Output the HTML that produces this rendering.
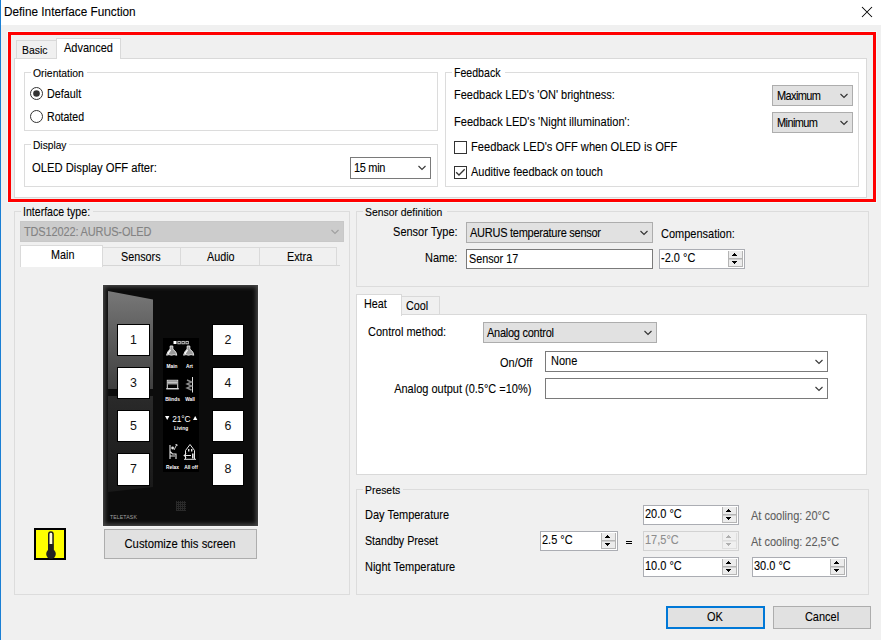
<!DOCTYPE html><html><head><meta charset="utf-8"><style>
html,body{margin:0;padding:0;}
body{width:881px;height:640px;overflow:hidden;position:relative;background:#f0f0f0;font-family:"Liberation Sans",sans-serif;}
.t{position:absolute;white-space:nowrap;font-family:"Liberation Sans",sans-serif;-webkit-text-stroke:0.1px currentColor;}
.r{position:absolute;box-sizing:border-box;}
svg.r{overflow:visible;}
</style></head><body>
<div class="r" style="left:0px;top:0px;width:881px;height:25px;background:#fff;"></div>
<div class="r" style="left:0px;top:0px;width:1px;height:640px;background:#1a7fd4;"></div>
<div class="t" style="left:4.3px;top:5px;font-size:12.626px;line-height:15px;color:#000;transform:scaleX(0.9346);transform-origin:0 0;">Define Interface Function</div>
<svg class="r" style="left:861px;top:6px" width="12" height="12" viewBox="0 0 12 12"><path d="M1 1 L11 11 M11 1 L1 11" stroke="#000" stroke-width="1.05" fill="none"/></svg>
<div class="r" style="left:7px;top:31px;width:870px;height:172px;border:1px solid #f2fcfc;"></div>
<div class="r" style="left:8px;top:32px;width:868px;height:170px;border:3px solid #ff0000;"></div>
<div class="r" style="left:14px;top:58px;width:853px;height:140px;background:#fff;border:1px solid #d9d9d9;"></div>
<div class="r" style="left:16px;top:40px;width:41px;height:18px;background:#f0f0f0;border:1px solid #d9d9d9;border-bottom:none;"></div>
<div class="r" style="left:56px;top:38px;width:65px;height:21px;background:#fff;border:1px solid #d9d9d9;border-bottom:none;"></div>
<div class="r" style="left:57px;top:58px;width:63px;height:1px;background:#fff;"></div>
<div class="t" style="left:22.1px;top:43px;font-size:11.7px;line-height:14px;color:#000;transform:scaleX(0.8889);transform-origin:0 0;">Basic</div>
<div class="t" style="left:63.7px;top:41px;font-size:12.375px;line-height:15px;color:#000;transform:scaleX(0.8889);transform-origin:0 0;">Advanced</div>
<div class="r" style="left:24px;top:72px;width:414px;height:59px;border:1px solid #dcdcdc;"></div>
<div class="r" style="left:30.5px;top:72px;width:56.0px;height:1px;background:#fff;"></div>
<div class="t" style="left:32.5px;top:66px;font-size:11.7px;line-height:14px;color:#000;transform:scaleX(0.8889);transform-origin:0 0;">Orientation</div>
<svg class="r" style="left:30px;top:87px" width="13" height="13" viewBox="0 0 13 13"><circle cx="6.5" cy="6.5" r="6" fill="#fff" stroke="#333" stroke-width="1"/><circle cx="6.5" cy="6.5" r="3.3" fill="#333"/></svg>
<div class="t" style="left:46.8px;top:87px;font-size:12.15px;line-height:15px;color:#000;transform:scaleX(0.8889);transform-origin:0 0;">Default</div>
<svg class="r" style="left:30px;top:110px" width="13" height="13" viewBox="0 0 13 13"><circle cx="6.5" cy="6.5" r="6" fill="#fff" stroke="#333" stroke-width="1"/></svg>
<div class="t" style="left:46.8px;top:110px;font-size:11.925px;line-height:14px;color:#000;transform:scaleX(0.8889);transform-origin:0 0;">Rotated</div>
<div class="r" style="left:24px;top:144px;width:414px;height:43px;border:1px solid #dcdcdc;"></div>
<div class="r" style="left:30.5px;top:144px;width:38.0px;height:1px;background:#fff;"></div>
<div class="t" style="left:32.5px;top:138px;font-size:11.475px;line-height:14px;color:#000;transform:scaleX(0.8889);transform-origin:0 0;">Display</div>
<div class="t" style="left:31.8px;top:161px;font-size:12.656px;line-height:15px;color:#000;transform:scaleX(0.8889);transform-origin:0 0;">OLED Display OFF after:</div>
<div class="r" style="left:350px;top:157px;width:81px;height:22px;background:#fff;border:1px solid #7a7a7a;"></div>
<div class="t" style="left:353.5px;top:161px;font-size:12.375px;line-height:15px;color:#000;letter-spacing:-0.337px;transform:scaleX(0.8889);transform-origin:0 0;">15 min</div>
<svg class="r" style="left:417px;top:165px" width="11" height="7" viewBox="0 0 11 7"><path d="M1.5 1 L5 4.5 L8.5 1" fill="none" stroke="#3a3a3a" stroke-width="1.15"/></svg>
<div class="r" style="left:445px;top:72px;width:414px;height:115px;border:1px solid #dcdcdc;"></div>
<div class="r" style="left:452.3px;top:72px;width:53.0px;height:1px;background:#fff;"></div>
<div class="t" style="left:454.3px;top:66px;font-size:11.925px;line-height:14px;color:#000;transform:scaleX(0.8889);transform-origin:0 0;">Feedback</div>
<div class="t" style="left:453.6px;top:88px;font-size:12.375px;line-height:15px;color:#000;transform:scaleX(0.8889);transform-origin:0 0;">Feedback LED's 'ON' brightness:</div>
<div class="t" style="left:453.6px;top:115px;font-size:12.487px;line-height:15px;color:#000;transform:scaleX(0.8889);transform-origin:0 0;">Feedback LED's 'Night illumination':</div>
<div class="r" style="left:772px;top:85px;width:81px;height:21px;background:#e1e1e1;border:1px solid #adadad;"></div>
<div class="t" style="left:776.5px;top:89px;font-size:12.375px;line-height:15px;color:#000;letter-spacing:-0.675px;transform:scaleX(0.8889);transform-origin:0 0;">Maximum</div>
<svg class="r" style="left:839px;top:93px" width="11" height="7" viewBox="0 0 11 7"><path d="M1.5 1 L5 4.5 L8.5 1" fill="none" stroke="#333" stroke-width="1.15"/></svg>
<div class="r" style="left:772px;top:112px;width:81px;height:21px;background:#e1e1e1;border:1px solid #adadad;"></div>
<div class="t" style="left:776.5px;top:116px;font-size:12.375px;line-height:15px;color:#000;letter-spacing:-0.675px;transform:scaleX(0.8889);transform-origin:0 0;">Minimum</div>
<svg class="r" style="left:839px;top:120px" width="11" height="7" viewBox="0 0 11 7"><path d="M1.5 1 L5 4.5 L8.5 1" fill="none" stroke="#333" stroke-width="1.15"/></svg>
<div class="r" style="left:454px;top:141px;width:13px;height:13px;background:#fff;border:1px solid #333;"></div>
<div class="t" style="left:471.3px;top:140px;font-size:12.544px;line-height:15px;color:#000;transform:scaleX(0.8889);transform-origin:0 0;">Feedback LED's OFF when OLED is OFF</div>
<div class="r" style="left:454px;top:166px;width:13px;height:13px;background:#fff;border:1px solid #333;"></div>
<svg class="r" style="left:454px;top:166px" width="13" height="13" viewBox="0 0 13 13"><path d="M2.2 6.3 L5 9 L10.7 3.3" fill="none" stroke="#333" stroke-width="1.3"/></svg>
<div class="t" style="left:471.3px;top:165px;font-size:12.375px;line-height:15px;color:#000;transform:scaleX(0.8889);transform-origin:0 0;">Auditive feedback on touch</div>
<div class="r" style="left:14px;top:211px;width:336px;height:384px;border:1px solid #dcdcdc;"></div>
<div class="r" style="left:21.4px;top:211px;width:72.0px;height:1px;background:#f0f0f0;"></div>
<div class="t" style="left:23.4px;top:205px;font-size:11.925px;line-height:14px;color:#000;transform:scaleX(0.8889);transform-origin:0 0;">Interface type:</div>
<div class="r" style="left:20px;top:221px;width:324px;height:21px;background:#cccccc;border:1px solid #c8c8c8;"></div>
<div class="t" style="left:24.4px;top:225px;font-size:12.375px;line-height:15px;color:#838383;letter-spacing:-0.158px;transform:scaleX(0.8889);transform-origin:0 0;">TDS12022: AURUS-OLED</div>
<svg class="r" style="left:330px;top:229px" width="11" height="7" viewBox="0 0 11 7"><path d="M1.5 1 L5 4.5 L8.5 1" fill="none" stroke="#a0a0a0" stroke-width="1.15"/></svg>
<div class="r" style="left:20px;top:265px;width:320px;height:1px;background:#d6d6d6;"></div>
<div class="r" style="left:102px;top:247px;width:79px;height:18px;background:#f0f0f0;border:1px solid #dadada;border-bottom:none;"></div>
<div class="r" style="left:180px;top:247px;width:80px;height:18px;background:#f0f0f0;border:1px solid #dadada;border-bottom:none;"></div>
<div class="r" style="left:259px;top:247px;width:78px;height:18px;background:#f0f0f0;border:1px solid #dadada;border-bottom:none;"></div>
<div class="r" style="left:20px;top:245px;width:83px;height:22px;background:#fff;border:1px solid #dadada;border-bottom:none;"></div>
<div class="t" style="left:50.5px;top:248px;font-size:12.15px;line-height:15px;color:#000;transform:scaleX(0.8889);transform-origin:0 0;">Main</div>
<div class="t" style="left:121px;top:250px;font-size:12.15px;line-height:15px;color:#000;transform:scaleX(0.8889);transform-origin:0 0;">Sensors</div>
<div class="t" style="left:206.5px;top:250px;font-size:12.15px;line-height:15px;color:#000;transform:scaleX(0.8889);transform-origin:0 0;">Audio</div>
<div class="t" style="left:287px;top:250px;font-size:12.15px;line-height:15px;color:#000;transform:scaleX(0.8889);transform-origin:0 0;">Extra</div>
<div class="r" style="left:356px;top:211px;width:513px;height:76px;border:1px solid #dcdcdc;"></div>
<div class="r" style="left:363.3px;top:211px;width:84.0px;height:1px;background:#f0f0f0;"></div>
<div class="t" style="left:365.3px;top:205px;font-size:11.7px;line-height:14px;color:#000;transform:scaleX(0.8889);transform-origin:0 0;">Sensor definition</div>
<div class="t" style="right:423.4px;top:225px;font-size:12.375px;line-height:15px;color:#000;transform:scaleX(0.8889);transform-origin:100% 0;">Sensor Type:</div>
<div class="t" style="right:423.4px;top:251px;font-size:12.375px;line-height:15px;color:#000;transform:scaleX(0.8889);transform-origin:100% 0;">Name:</div>
<div class="r" style="left:466px;top:222px;width:187px;height:21px;background:#e1e1e1;border:1px solid #adadad;"></div>
<div class="t" style="left:470px;top:226px;font-size:12.375px;line-height:15px;color:#000;letter-spacing:-0.281px;transform:scaleX(0.8889);transform-origin:0 0;">AURUS temperature sensor</div>
<svg class="r" style="left:639px;top:230px" width="11" height="7" viewBox="0 0 11 7"><path d="M1.5 1 L5 4.5 L8.5 1" fill="none" stroke="#333" stroke-width="1.15"/></svg>
<div class="r" style="left:466px;top:249px;width:187px;height:20px;background:#fff;border:1px solid #7a7a7a;"></div>
<div class="t" style="left:469px;top:252px;font-size:12.15px;line-height:15px;color:#000;transform:scaleX(0.8889);transform-origin:0 0;">Sensor 17</div>
<div class="t" style="left:661.3px;top:227px;font-size:12.375px;line-height:15px;color:#000;transform:scaleX(0.8889);transform-origin:0 0;">Compensation:</div>
<div class="r" style="left:659px;top:249px;width:86px;height:20px;background:#fff;border:1px solid #abadb3;"></div>
<div class="t" style="left:661px;top:251px;font-size:12.375px;line-height:15px;color:#000;transform:scaleX(0.8889);transform-origin:0 0;">-2.0 °C</div>
<div class="r" style="left:728px;top:251px;width:15px;height:16px;background:#ececec;border:1px solid #b4b4b4;border-top:none;"></div>
<div class="r" style="left:728px;top:258px;width:15px;height:1px;background:#b4b4b4;"></div>
<div class="r" style="left:729px;top:259px;width:13px;height:1px;background:#cfcfcf;"></div>
<div class="r" style="left:734px;top:253px;width:1px;height:1px;background:#000;"></div>
<div class="r" style="left:733px;top:254px;width:3px;height:1px;background:#000;"></div>
<div class="r" style="left:732px;top:255px;width:5px;height:1px;background:#000;"></div>
<div class="r" style="left:734px;top:263px;width:1px;height:1px;background:#000;"></div>
<div class="r" style="left:733px;top:262px;width:3px;height:1px;background:#000;"></div>
<div class="r" style="left:732px;top:261px;width:5px;height:1px;background:#000;"></div>
<div class="r" style="left:356px;top:314px;width:511px;height:161px;background:#fff;border:1px solid #d9d9d9;"></div>
<div class="r" style="left:401px;top:296px;width:39px;height:18px;background:#f0f0f0;border:1px solid #d9d9d9;border-bottom:none;"></div>
<div class="r" style="left:356px;top:294px;width:46px;height:22px;background:#fff;border:1px solid #d9d9d9;border-bottom:none;"></div>
<div class="t" style="left:364.1px;top:297px;font-size:12.15px;line-height:15px;color:#000;transform:scaleX(0.8889);transform-origin:0 0;">Heat</div>
<div class="t" style="left:405.9px;top:299px;font-size:12.15px;line-height:15px;color:#000;transform:scaleX(0.8889);transform-origin:0 0;">Cool</div>
<div class="t" style="left:368.2px;top:325px;font-size:12.375px;line-height:15px;color:#000;transform:scaleX(0.8889);transform-origin:0 0;">Control method:</div>
<div class="r" style="left:483px;top:322px;width:174px;height:21px;background:#e1e1e1;border:1px solid #adadad;"></div>
<div class="t" style="left:487px;top:326px;font-size:12.375px;line-height:15px;color:#000;letter-spacing:-0.281px;transform:scaleX(0.8889);transform-origin:0 0;">Analog control</div>
<svg class="r" style="left:643px;top:330px" width="11" height="7" viewBox="0 0 11 7"><path d="M1.5 1 L5 4.5 L8.5 1" fill="none" stroke="#333" stroke-width="1.15"/></svg>
<div class="t" style="right:349.29999999999995px;top:356px;font-size:12.375px;line-height:15px;color:#000;transform:scaleX(0.8889);transform-origin:100% 0;">On/Off</div>
<div class="r" style="left:545px;top:351px;width:283px;height:21px;background:#fff;border:1px solid #7a7a7a;"></div>
<div class="t" style="left:550.6px;top:354px;font-size:12.375px;line-height:15px;color:#000;transform:scaleX(0.8889);transform-origin:0 0;">None</div>
<svg class="r" style="left:814px;top:359px" width="11" height="7" viewBox="0 0 11 7"><path d="M1.5 1 L5 4.5 L8.5 1" fill="none" stroke="#3a3a3a" stroke-width="1.15"/></svg>
<div class="t" style="right:349.29999999999995px;top:382px;font-size:12.375px;line-height:15px;color:#000;transform:scaleX(0.8889);transform-origin:100% 0;">Analog output (0.5°C =10%)</div>
<div class="r" style="left:545px;top:378px;width:283px;height:21px;background:#fff;border:1px solid #7a7a7a;"></div>
<svg class="r" style="left:814px;top:386px" width="11" height="7" viewBox="0 0 11 7"><path d="M1.5 1 L5 4.5 L8.5 1" fill="none" stroke="#3a3a3a" stroke-width="1.15"/></svg>
<div class="r" style="left:356px;top:489px;width:513px;height:106px;border:1px solid #dcdcdc;"></div>
<div class="r" style="left:363.4px;top:489px;width:40.0px;height:1px;background:#f0f0f0;"></div>
<div class="t" style="left:365.4px;top:483px;font-size:11.7px;line-height:14px;color:#000;transform:scaleX(0.8889);transform-origin:0 0;">Presets</div>
<div class="t" style="left:364.6px;top:508px;font-size:12.375px;line-height:15px;color:#000;transform:scaleX(0.8889);transform-origin:0 0;">Day Temperature</div>
<div class="t" style="left:364.6px;top:534px;font-size:12.037px;line-height:14px;color:#000;transform:scaleX(0.8889);transform-origin:0 0;">Standby Preset</div>
<div class="t" style="left:364.6px;top:560px;font-size:12.375px;line-height:15px;color:#000;transform:scaleX(0.8889);transform-origin:0 0;">Night Temperature</div>
<div class="r" style="left:643px;top:505px;width:96px;height:20px;background:#fff;border:1px solid #abadb3;"></div>
<div class="t" style="left:645px;top:507px;font-size:12.375px;line-height:15px;color:#000;transform:scaleX(0.8889);transform-origin:0 0;">20.0 °C</div>
<div class="r" style="left:722px;top:507px;width:15px;height:16px;background:#ececec;border:1px solid #b4b4b4;border-top:none;"></div>
<div class="r" style="left:722px;top:514px;width:15px;height:1px;background:#b4b4b4;"></div>
<div class="r" style="left:723px;top:515px;width:13px;height:1px;background:#cfcfcf;"></div>
<div class="r" style="left:728px;top:509px;width:1px;height:1px;background:#000;"></div>
<div class="r" style="left:727px;top:510px;width:3px;height:1px;background:#000;"></div>
<div class="r" style="left:726px;top:511px;width:5px;height:1px;background:#000;"></div>
<div class="r" style="left:728px;top:519px;width:1px;height:1px;background:#000;"></div>
<div class="r" style="left:727px;top:518px;width:3px;height:1px;background:#000;"></div>
<div class="r" style="left:726px;top:517px;width:5px;height:1px;background:#000;"></div>
<div class="r" style="left:540px;top:531px;width:78px;height:20px;background:#fff;border:1px solid #abadb3;"></div>
<div class="t" style="left:542px;top:533px;font-size:12.375px;line-height:15px;color:#000;transform:scaleX(0.8889);transform-origin:0 0;">2.5 °C</div>
<div class="r" style="left:601px;top:533px;width:15px;height:16px;background:#ececec;border:1px solid #b4b4b4;border-top:none;"></div>
<div class="r" style="left:601px;top:540px;width:15px;height:1px;background:#b4b4b4;"></div>
<div class="r" style="left:602px;top:541px;width:13px;height:1px;background:#cfcfcf;"></div>
<div class="r" style="left:607px;top:535px;width:1px;height:1px;background:#000;"></div>
<div class="r" style="left:606px;top:536px;width:3px;height:1px;background:#000;"></div>
<div class="r" style="left:605px;top:537px;width:5px;height:1px;background:#000;"></div>
<div class="r" style="left:607px;top:545px;width:1px;height:1px;background:#000;"></div>
<div class="r" style="left:606px;top:544px;width:3px;height:1px;background:#000;"></div>
<div class="r" style="left:605px;top:543px;width:5px;height:1px;background:#000;"></div>
<div class="r" style="left:626px;top:541px;width:6px;height:1px;background:#000;"></div>
<div class="r" style="left:626px;top:543px;width:6px;height:1px;background:#000;"></div>
<div class="r" style="left:643px;top:531px;width:96px;height:20px;background:#f0f0f0;border:1px solid #d2d2d2;"></div>
<div class="t" style="left:645px;top:533px;font-size:12.375px;line-height:15px;color:#8d8d8d;transform:scaleX(0.8889);transform-origin:0 0;">17,5°C</div>
<div class="r" style="left:722px;top:533px;width:15px;height:16px;background:#f0f0f0;border:1px solid #dedede;border-top:none;"></div>
<div class="r" style="left:722px;top:540px;width:15px;height:1px;background:#dedede;"></div>
<div class="r" style="left:723px;top:541px;width:13px;height:1px;background:#e6e6e6;"></div>
<div class="r" style="left:728px;top:535px;width:1px;height:1px;background:#b0b0b0;"></div>
<div class="r" style="left:727px;top:536px;width:3px;height:1px;background:#b0b0b0;"></div>
<div class="r" style="left:726px;top:537px;width:5px;height:1px;background:#b0b0b0;"></div>
<div class="r" style="left:728px;top:545px;width:1px;height:1px;background:#b0b0b0;"></div>
<div class="r" style="left:727px;top:544px;width:3px;height:1px;background:#b0b0b0;"></div>
<div class="r" style="left:726px;top:543px;width:5px;height:1px;background:#b0b0b0;"></div>
<div class="r" style="left:643px;top:557px;width:96px;height:20px;background:#fff;border:1px solid #abadb3;"></div>
<div class="t" style="left:645px;top:559px;font-size:12.375px;line-height:15px;color:#000;transform:scaleX(0.8889);transform-origin:0 0;">10.0 °C</div>
<div class="r" style="left:722px;top:559px;width:15px;height:16px;background:#ececec;border:1px solid #b4b4b4;border-top:none;"></div>
<div class="r" style="left:722px;top:566px;width:15px;height:1px;background:#b4b4b4;"></div>
<div class="r" style="left:723px;top:567px;width:13px;height:1px;background:#cfcfcf;"></div>
<div class="r" style="left:728px;top:561px;width:1px;height:1px;background:#000;"></div>
<div class="r" style="left:727px;top:562px;width:3px;height:1px;background:#000;"></div>
<div class="r" style="left:726px;top:563px;width:5px;height:1px;background:#000;"></div>
<div class="r" style="left:728px;top:571px;width:1px;height:1px;background:#000;"></div>
<div class="r" style="left:727px;top:570px;width:3px;height:1px;background:#000;"></div>
<div class="r" style="left:726px;top:569px;width:5px;height:1px;background:#000;"></div>
<div class="r" style="left:752px;top:557px;width:95px;height:20px;background:#fff;border:1px solid #abadb3;"></div>
<div class="t" style="left:754px;top:559px;font-size:12.375px;line-height:15px;color:#000;transform:scaleX(0.8889);transform-origin:0 0;">30.0 °C</div>
<div class="r" style="left:830px;top:559px;width:15px;height:16px;background:#ececec;border:1px solid #b4b4b4;border-top:none;"></div>
<div class="r" style="left:830px;top:566px;width:15px;height:1px;background:#b4b4b4;"></div>
<div class="r" style="left:831px;top:567px;width:13px;height:1px;background:#cfcfcf;"></div>
<div class="r" style="left:836px;top:561px;width:1px;height:1px;background:#000;"></div>
<div class="r" style="left:835px;top:562px;width:3px;height:1px;background:#000;"></div>
<div class="r" style="left:834px;top:563px;width:5px;height:1px;background:#000;"></div>
<div class="r" style="left:836px;top:571px;width:1px;height:1px;background:#000;"></div>
<div class="r" style="left:835px;top:570px;width:3px;height:1px;background:#000;"></div>
<div class="r" style="left:834px;top:569px;width:5px;height:1px;background:#000;"></div>
<div class="t" style="left:751.2px;top:509px;font-size:12.375px;line-height:15px;color:#5e5e5e;transform:scaleX(0.8889);transform-origin:0 0;">At cooling: 20°C</div>
<div class="t" style="left:751.2px;top:535px;font-size:12.375px;line-height:15px;color:#5e5e5e;transform:scaleX(0.8889);transform-origin:0 0;">At cooling: 22,5°C</div>
<div class="r" style="left:666px;top:606px;width:99px;height:23px;background:#e1e1e1;border:2px solid #0078d7;"></div>
<div class="t" style="left:685.0px;width:60px;text-align:center;top:610px;font-size:12.375px;line-height:15px;color:#000;transform:scaleX(0.8889);transform-origin:50% 0;">OK</div>
<div class="r" style="left:773px;top:606px;width:98px;height:23px;background:#e1e1e1;border:1px solid #adadad;"></div>
<div class="t" style="left:781.5px;width:80px;text-align:center;top:610px;font-size:12.375px;line-height:15px;color:#000;transform:scaleX(0.8889);transform-origin:50% 0;">Cancel</div>
<div class="r" style="left:34px;top:528px;width:32px;height:32px;background:#ffff00;border:2px solid #000;"></div>
<svg class="r" style="left:34px;top:528px" width="32" height="32" viewBox="0 0 32 32"><rect x="14.75" y="4" width="4.3" height="20" rx="2.15" fill="#fffbd8" stroke="#1c1c1c" stroke-width="1.5"/><rect x="14.5" y="16" width="4.8" height="10" fill="#222"/><circle cx="17" cy="26" r="4.8" fill="#222"/></svg>
<div class="r" style="left:104px;top:529px;width:153px;height:30px;background:#e1e1e1;border:1px solid #adadad;"></div>
<div class="t" style="left:105.19999999999999px;width:150px;text-align:center;top:536px;font-size:12.713px;line-height:15px;color:#000;transform:scaleX(0.8889);transform-origin:50% 0;">Customize this screen</div>
<div class="r" style="left:102px;top:284px;width:157px;height:243px;border:1px solid #f5f5f5;"></div>
<div class="r" style="left:103px;top:285px;width:155px;height:241px;background:#0c0c0c;box-shadow:inset 0 0 4px 2px #4a4a4a;"></div>
<svg class="r" style="left:103px;top:285px" width="155" height="240" viewBox="0 0 155 240"><defs><linearGradient id="rg" x1="0" y1="0" x2="0" y2="1"><stop offset="0" stop-color="#787878"/><stop offset="0.4" stop-color="#606060"/><stop offset="1" stop-color="#404040"/></linearGradient><linearGradient id="rg2" x1="0" y1="0" x2="0" y2="1"><stop offset="0" stop-color="#2a2a2a"/><stop offset="1" stop-color="#191919"/></linearGradient></defs><polygon points="5,6 50,14.5 50,104 5,104" fill="url(#rg)"/><polygon points="5,111 50,111 50,202 5,207" fill="url(#rg2)"/></svg>
<div class="r" style="left:117px;top:324px;width:33px;height:32px;background:#fff;border:1px solid #000;"></div>
<div class="t" style="left:118.5px;width:30px;text-align:center;top:333px;font-size:12.4px;line-height:15px;color:#111;transform-origin:50% 0;-webkit-text-stroke:0;">1</div>
<div class="r" style="left:117px;top:367px;width:33px;height:32px;background:#fff;border:1px solid #000;"></div>
<div class="t" style="left:118.5px;width:30px;text-align:center;top:376px;font-size:12.4px;line-height:15px;color:#111;transform-origin:50% 0;-webkit-text-stroke:0;">3</div>
<div class="r" style="left:117px;top:410px;width:33px;height:32px;background:#fff;border:1px solid #000;"></div>
<div class="t" style="left:118.5px;width:30px;text-align:center;top:419px;font-size:12.4px;line-height:15px;color:#111;transform-origin:50% 0;-webkit-text-stroke:0;">5</div>
<div class="r" style="left:117px;top:453px;width:33px;height:33px;background:#fff;border:1px solid #000;"></div>
<div class="t" style="left:118.5px;width:30px;text-align:center;top:462px;font-size:12.4px;line-height:15px;color:#111;transform-origin:50% 0;-webkit-text-stroke:0;">7</div>
<div class="r" style="left:212px;top:324px;width:32px;height:32px;background:#fff;border:1px solid #000;"></div>
<div class="t" style="left:213.0px;width:30px;text-align:center;top:333px;font-size:12.4px;line-height:15px;color:#111;transform-origin:50% 0;-webkit-text-stroke:0;">2</div>
<div class="r" style="left:212px;top:367px;width:32px;height:32px;background:#fff;border:1px solid #000;"></div>
<div class="t" style="left:213.0px;width:30px;text-align:center;top:376px;font-size:12.4px;line-height:15px;color:#111;transform-origin:50% 0;-webkit-text-stroke:0;">4</div>
<div class="r" style="left:212px;top:410px;width:32px;height:32px;background:#fff;border:1px solid #000;"></div>
<div class="t" style="left:213.0px;width:30px;text-align:center;top:419px;font-size:12.4px;line-height:15px;color:#111;transform-origin:50% 0;-webkit-text-stroke:0;">6</div>
<div class="r" style="left:212px;top:453px;width:32px;height:33px;background:#fff;border:1px solid #000;"></div>
<div class="t" style="left:213.0px;width:30px;text-align:center;top:462px;font-size:12.4px;line-height:15px;color:#111;transform-origin:50% 0;-webkit-text-stroke:0;">8</div>
<div class="r" style="left:163px;top:338px;width:36px;height:134px;background:#000;"></div>
<svg class="r" style="left:163px;top:338px" width="36" height="134" viewBox="0 0 36 134"><rect x="10.5" y="3" width="3" height="3" fill="#fff"/><g fill="none" stroke="#cfcfcf" stroke-width="0.9"><rect x="14.9" y="3.4" width="2.4" height="2.4"/><rect x="18.9" y="3.4" width="2.4" height="2.4"/><rect x="22.9" y="3.4" width="2.4" height="2.4"/></g><path d="M7.2 8 L9.8 8 L9.8 11 Q13.8 14 13.8 17.2 Q11 16 8.5 17.2 Q6 16 3.6 17.2 Q4 14 7.2 11 Z" fill="#9a9a9a" stroke="#e0e0e0" stroke-width="1"/><path d="M5 16 Q6 13.5 7.6 12" fill="none" stroke="#fff" stroke-width="1.2"/><path d="M24.2 8 L26.8 8 L26.8 11 Q30.8 14 30.8 17.2 Q28 16 25.5 17.2 Q23 16 20.6 17.2 Q21 14 24.2 11 Z" fill="#9a9a9a" stroke="#e0e0e0" stroke-width="1"/><path d="M22 16 Q23 13.5 24.6 12" fill="none" stroke="#fff" stroke-width="1.2"/><text x="9" y="30" font-size="4.8" font-family="Liberation Sans" font-weight="bold" text-anchor="middle" fill="#ffffff" stroke="none">Main</text><text x="26.5" y="30" font-size="4.8" font-family="Liberation Sans" font-weight="bold" text-anchor="middle" fill="#ffffff" stroke="none">Art</text><rect x="4.3" y="42.3" width="10.4" height="8.4" fill="none" stroke="#e0e0e0" stroke-width="1"/><rect x="4.5" y="42.5" width="10" height="4" fill="#9a9a9a"/><path d="M4.5 44.5 H14.5" stroke="#ddd" stroke-width="0.6"/><path d="M3 50.8 H16" stroke="#e0e0e0" stroke-width="1"/><path d="M29.5 39 L29.5 54.5" stroke="#e0e0e0" stroke-width="1"/><path d="M24 42 L28.5 44 L24 46 L28.5 48 L24 50 L28.5 52" fill="none" stroke="#8a8a8a" stroke-width="1.4"/><text x="9.5" y="63" font-size="4.8" font-family="Liberation Sans" font-weight="bold" text-anchor="middle" fill="#ffffff" stroke="none">Blinds</text><text x="27" y="63" font-size="4.8" font-family="Liberation Sans" font-weight="bold" text-anchor="middle" fill="#ffffff" stroke="none">Wall</text><path d="M2 78 L6.4 78 L4.2 82 Z" fill="#fff"/><path d="M30 82 L34.4 82 L32.2 78 Z" fill="#fff"/><text x="18.3" y="84.3" font-size="8.4" font-family="Liberation Sans" text-anchor="middle" fill="#fff" letter-spacing="-0.2">21°C</text><text x="18" y="92" font-size="4.8" font-family="Liberation Sans" font-weight="bold" text-anchor="middle" fill="#ffffff" stroke="none">Living</text><path d="M7 107 L7 113.5 L9.5 116 L13 116 L13 121 M7 113.5 L7 121 M7 118 L12 118" fill="none" stroke="#e6e6e6" stroke-width="1.1"/><circle cx="9.6" cy="110" r="1.4" fill="#e6e6e6"/><path d="M11 112 L14 106 M12.5 106 L14.5 108" fill="none" stroke="#e6e6e6" stroke-width="0.9"/><path d="M22.5 121 L22.5 112.5 L27 106.5 L31.5 112.5 L31.5 121" fill="none" stroke="#e6e6e6" stroke-width="1"/><rect x="25" y="111" width="1.4" height="2.5" fill="#e6e6e6"/><rect x="28" y="111" width="1.4" height="2.5" fill="#e6e6e6"/><path d="M21 117.5 L28 117.5 M23 115.5 L21 117.5 L23 119.5" fill="none" stroke="#e6e6e6" stroke-width="1"/><rect x="29" y="115.5" width="1.6" height="5" fill="#e6e6e6"/><path d="M21 121.3 L33 121.3" stroke="#e6e6e6" stroke-width="1"/><text x="9.5" y="130.5" font-size="4.8" font-family="Liberation Sans" font-weight="bold" text-anchor="middle" fill="#ffffff" stroke="none">Relax</text><text x="28" y="130.5" font-size="4.8" font-family="Liberation Sans" font-weight="bold" text-anchor="middle" fill="#ffffff" stroke="none">All off</text></svg>
<div class="r" style="left:176px;top:501px;width:10px;height:10px;background:repeating-linear-gradient(90deg,#2a2a2a 0 1px,transparent 1px 2px),repeating-linear-gradient(0deg,#2a2a2a 0 1px,transparent 1px 2px);"></div>
<div class="t" style="left:110px;top:514px;font-size:5.2px;line-height:6px;color:#a0a0a0;letter-spacing:0.1px;-webkit-text-stroke:0;">TELETASK</div>
</body></html>
